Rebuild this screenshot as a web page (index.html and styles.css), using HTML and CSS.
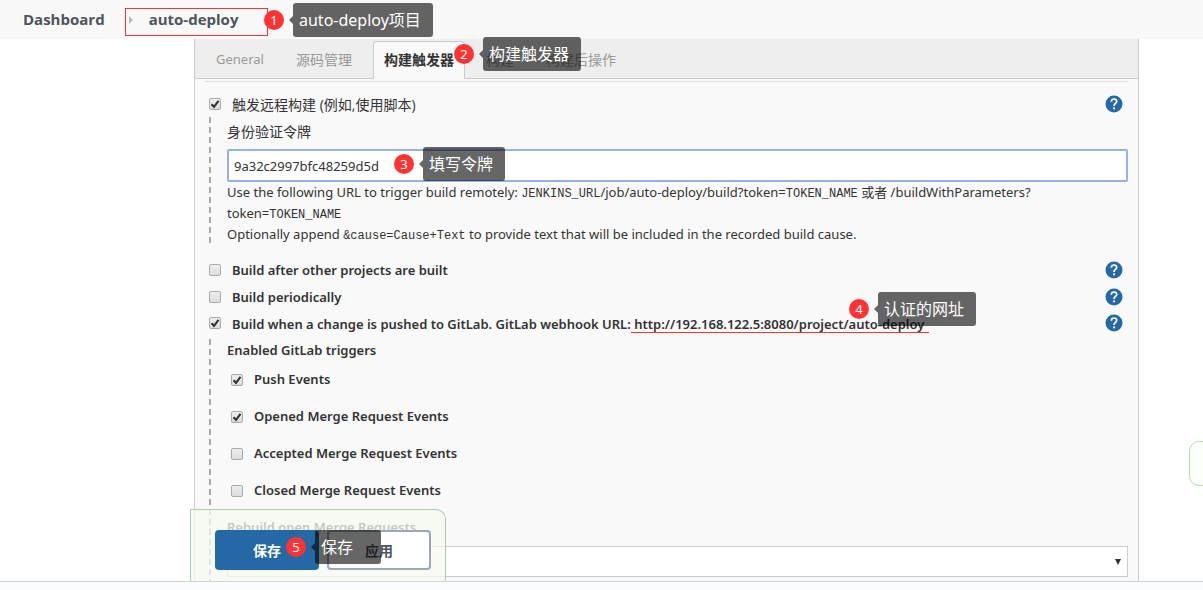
FILE: index.html
```html
<!DOCTYPE html>
<html lang="zh-CN">
<head>
<meta charset="utf-8">
<title>auto-deploy Config</title>
<link rel="stylesheet" href="styles.css">
</head>
<body>
<header class="breadcrumbs">
  <a class="crumb" href="#">Dashboard</a>
  <div class="crumb-marked">
    <svg class="crumb-arrow" width="4" height="8" viewBox="0 0 4 8"><path d="M0 0L4 4L0 8Z" fill="#bbb"/></svg>
    <a class="crumb" href="#">auto-deploy</a>
  </div>
</header>
<main class="panel">
  <nav class="tabs">
    <a class="tab tab-latin" href="#">General</a>
    <a class="tab" href="#">源码管理</a>
    <a class="tab tab-active" href="#">构建触发器</a>
    <a class="tab" href="#">构建</a>
    <a class="tab" href="#">构建后操作</a>
  </nav>
  <form class="config">
    <div class="row row-first">
      <input class="check" type="checkbox" id="remote" checked>
      <label class="row-label regular" for="remote">触发远程构建 (例如,使用脚本)</label>
      <button class="help" type="button" aria-label="Help"><svg width="18" height="18" viewBox="0 0 18 18"><circle cx="9" cy="9" r="8.5" fill="#2469a5"/><path d="M6.3 6.8C6.3 5 7.4 4 9 4s2.7 1 2.7 2.5C11.7 8.400 9 8.600 9 10.900" fill="none" stroke="#fff" stroke-width="1.700"/><rect x="8.100" y="12.400" width="1.900" height="1.900" fill="#fff"/></svg></button>
    </div>
    <div class="nested nested-token">
      <label class="token-label" for="token">身份验证令牌</label>
      <input class="token" type="text" id="token" value="9a32c2997bfc48259d5d">
      <p class="hint">Use the following URL to trigger build remotely: <code>JENKINS_URL</code>/job/auto-deploy/build?token=<code>TOKEN_NAME</code> 或者 /buildWithParameters?<br>token=<code>TOKEN_NAME</code><br>Optionally append <code>&amp;cause=Cause+Text</code> to provide text that will be included in the recorded build cause.</p>
    </div>
    <div class="row">
      <input class="check" type="checkbox" id="after">
      <label class="row-label" for="after">Build after other projects are built</label>
      <button class="help" type="button" aria-label="Help"><svg width="18" height="18" viewBox="0 0 18 18"><circle cx="9" cy="9" r="8.5" fill="#2469a5"/><path d="M6.3 6.8C6.3 5 7.4 4 9 4s2.7 1 2.7 2.5C11.7 8.400 9 8.600 9 10.900" fill="none" stroke="#fff" stroke-width="1.700"/><rect x="8.100" y="12.400" width="1.900" height="1.900" fill="#fff"/></svg></button>
    </div>
    <div class="row">
      <input class="check" type="checkbox" id="periodic">
      <label class="row-label" for="periodic">Build periodically</label>
      <button class="help" type="button" aria-label="Help"><svg width="18" height="18" viewBox="0 0 18 18"><circle cx="9" cy="9" r="8.5" fill="#2469a5"/><path d="M6.3 6.8C6.3 5 7.4 4 9 4s2.7 1 2.7 2.5C11.7 8.400 9 8.600 9 10.900" fill="none" stroke="#fff" stroke-width="1.700"/><rect x="8.100" y="12.400" width="1.900" height="1.900" fill="#fff"/></svg></button>
    </div>
    <div class="row row-last">
      <input class="check" type="checkbox" id="push" checked>
      <label class="row-label" for="push">Build when a change is pushed to GitLab. GitLab webhook URL:<span class="webhook"> http://192.168.122.5:8080/project/auto-deploy</span></label>
      <button class="help" type="button" aria-label="Help"><svg width="18" height="18" viewBox="0 0 18 18"><circle cx="9" cy="9" r="8.5" fill="#2469a5"/><path d="M6.3 6.8C6.3 5 7.4 4 9 4s2.7 1 2.7 2.5C11.7 8.400 9 8.600 9 10.900" fill="none" stroke="#fff" stroke-width="1.700"/><rect x="8.100" y="12.400" width="1.900" height="1.900" fill="#fff"/></svg></button>
    </div>
    <div class="nested nested-gitlab">
      <div class="group-title">Enabled GitLab triggers</div>
      <div class="event"><input class="check" type="checkbox" id="ev1" checked><label for="ev1">Push Events</label></div>
      <div class="event"><input class="check" type="checkbox" id="ev2" checked><label for="ev2">Opened Merge Request Events</label></div>
      <div class="event"><input class="check" type="checkbox" id="ev3"><label for="ev3">Accepted Merge Request Events</label></div>
      <div class="event"><input class="check" type="checkbox" id="ev4"><label for="ev4">Closed Merge Request Events</label></div>
      <label class="rebuild-label" for="rebuild">Rebuild open Merge Requests</label>
      <select class="rebuild" id="rebuild"><option></option></select>
    </div>
  </form>
  <div class="save-bar">
    <button class="btn btn-primary" type="button">保存</button>
    <button class="btn btn-secondary" type="button">应用</button>
  </div>
</main>
<footer class="bottom"></footer>
<aside class="side-bubble"></aside>

<div class="note note-project"><span class="badge">1</span><span class="tip">auto-deploy项目</span></div>
<div class="note note-trigger"><span class="badge">2</span><span class="tip">构建触发器</span></div>
<div class="note note-token"><span class="badge">3</span><span class="tip">填写令牌</span></div>
<div class="note note-url"><span class="badge">4</span><span class="tip">认证的网址</span></div>
<div class="note note-save"><span class="badge">5</span><span class="tip">保存</span></div>
</body>
</html>
```
FILE: styles.css
```css
* { box-sizing: border-box; }

body {
  margin: 0;
  min-height: 100vh;
  display: flex;
  flex-direction: column;
  position: relative;
  overflow: hidden;
  background: #fff;
  color: #333;
  font: 14px/21px "Noto Sans", "Noto Sans CJK SC", sans-serif;
}

.breadcrumbs {
  display: flex;
  align-items: center;
  gap: 20px;
  height: 39px;
  padding: 0 23px;
  background: #f8f8f8;
}

.crumb {
  color: #4d545d;
  font-family: "Open Sans", sans-serif;
  font-size: 15px;
  font-weight: 700;
  text-decoration: none;
}

.crumb-marked {
  display: flex;
  align-items: center;
  gap: 16px;
  height: 28px;
  width: 143px;
  padding: 0 3px 4px;
  margin-top: 4px;
  border: 1px solid #f33;
}

.panel {
  flex: 1;
  position: relative;
  margin: 0 64px 0 194px;
  background: #f9f9f9;
  border: solid #ccc;
  border-width: 0 1px;
}

.tabs {
  display: flex;
  gap: 10px;
  height: 40px;
  padding: 2px 10px 0;
  background: #eee;
  border-bottom: 1px solid #ccc;
}

.tab {
  height: 38px;
  padding: 7px 10px 0;
  border: 1px solid transparent;
  border-bottom: 0;
  border-radius: 4px 4px 0 0;
  color: #999;
  text-decoration: none;
  white-space: nowrap;
}

.tab-latin { font-size: 13px; }

.tab-active {
  background: #f9f9f9;
  border-color: #ccc;
  color: #333;
  font-weight: 700;
}

.config {
  margin: 2px 10px 0;
  border-top: 1px solid #ddd;
}

.row {
  display: flex;
  align-items: center;
  height: 27px;
  padding: 0 5px 0 4px;
}

.row-first { margin-top: 8px; }

.row-last { height: 26px; }

.row-label {
  flex: 1;
  margin-left: 11px;
  padding-top: 2px;
  font: 600 13px/21px "Noto Sans", sans-serif;
}

.row-label.regular { font: 14px/21px "Open Sans", "Noto Sans CJK SC", sans-serif; }

.webhook {
  display: inline-block;
  padding-right: 5px;
  background: linear-gradient(#f33, #f33) 0 100% / 100% 1px no-repeat;
  line-height: 18px;
  white-space: pre;
}

.check {
  appearance: none;
  flex: none;
  width: 12px;
  height: 12px;
  margin: 0;
  border: 1px solid #aaa;
  border-radius: 2px;
  background: linear-gradient(#eee, #ddd);
}

.check:checked {
  background: url("data:image/svg+xml,%3Csvg xmlns='http://www.w3.org/2000/svg' viewBox='0 0 10 10'%3E%3Cpath d='M1.500 5.300L4 7.800L8.500 1.800' fill='none' stroke='%23333' stroke-width='2.100'/%3E%3C/svg%3E") center / 10px 10px no-repeat, linear-gradient(#eee, #ddd);
}

.help {
  display: flex;
  padding: 0;
  border: 0;
  background: none;
}

.nested {
  margin-left: 4px;
  padding-left: 18px;
  background: repeating-linear-gradient(#aaa 0 6px, transparent 6px 10px) 0 0 / 2px 100% no-repeat;
}

.nested-token { margin-bottom: 11px; }

.token-label {
  display: block;
  height: 32px;
  padding-top: 4px;
}

.token {
  display: block;
  width: 100%;
  height: 33px;
  padding: 0 5px;
  border: 2px solid #94b1ed;
  border-radius: 2px;
  outline: 0;
  background: #fff;
  color: #333;
  font: inherit;
  font-size: 13px;
}

.hint {
  margin: 0;
  font-size: 13px;
}

code { font: 12px/1 "Liberation Mono", monospace; }

.nested-gitlab {
  margin-top: 3px;
  padding-bottom: 4px;
  font: 600 13px/21px "Noto Sans", sans-serif;
}

.group-title { padding-top: 1px; }

.event {
  display: flex;
  align-items: center;
  gap: 11px;
  height: 37px;
  padding-left: 4px;
}

.rebuild-label {
  display: block;
  height: 37px;
  padding-top: 8px;
}

.rebuild {
  appearance: none;
  display: block;
  width: 100%;
  height: 31px;
  border: 1px solid #ccc;
  border-radius: 0;
  background: #fff url("data:image/svg+xml,%3Csvg xmlns='http://www.w3.org/2000/svg' viewBox='0 0 6 6'%3E%3Cpath d='M0 0H6L3 6Z' fill='%23333'/%3E%3C/svg%3E") right 6px center / 6px 6px no-repeat;
}

.save-bar {
  position: absolute;
  left: -5px;
  bottom: 0;
  display: flex;
  gap: 8px;
  width: 256px;
  height: 72px;
  padding: 20px 14px 0 24px;
  border: 1px solid #a9cbb9;
  border-bottom: 0;
  border-radius: 0 10px 0 0;
  background: rgba(246, 250, 240, 0.75);
}

.btn {
  width: 104px;
  height: 40px;
  padding: 0;
  border: 2px solid #9ba7b3;
  border-radius: 4px;
  background: #fff;
  color: #4d545d;
  font: 700 14px/21px "Noto Sans", "Noto Sans CJK SC", sans-serif;
}

.btn-primary {
  border-color: #2469a5;
  background: #2469a5;
  color: #fff;
}

.bottom {
  height: 9px;
  border-top: 1px solid #d3d6d9;
  background: #fafcff;
}

.side-bubble {
  position: absolute;
  right: -10px;
  bottom: 104px;
  width: 24px;
  height: 45px;
  border: 1px solid #b5dfa0;
  border-radius: 10px;
  background: #fafff7;
}

/* Numbered callouts laid over the form */
.note {
  position: absolute;
  display: flex;
  align-items: center;
  gap: 9px;
  color: #fff;
  white-space: nowrap;
}

.badge {
  width: 20px;
  height: 20px;
  border-radius: 50%;
  background: #f33;
  font-size: 13px;
  line-height: 20px;
  text-align: center;
}

.tip {
  position: relative;
  min-width: 66px;
  height: 34px;
  padding: 0 12px 0 6px;
  border-radius: 3px;
  background: rgba(0, 0, 0, 0.6);
  font-size: 16px;
  line-height: 34px;
}

.tip::before {
  content: "";
  position: absolute;
  left: -4px;
  top: 13px;
  border: solid transparent;
  border-width: 4px 4px 4px 0;
  border-right-color: rgba(0, 0, 0, 0.6);
}

.note-project { left: 264px; top: 3px; }
.note-trigger { left: 454px; top: 37px; }
.note-token { left: 394px; top: 147px; }
.note-url { left: 849px; top: 292px; }
.note-save { left: 286px; top: 530px; }
```
